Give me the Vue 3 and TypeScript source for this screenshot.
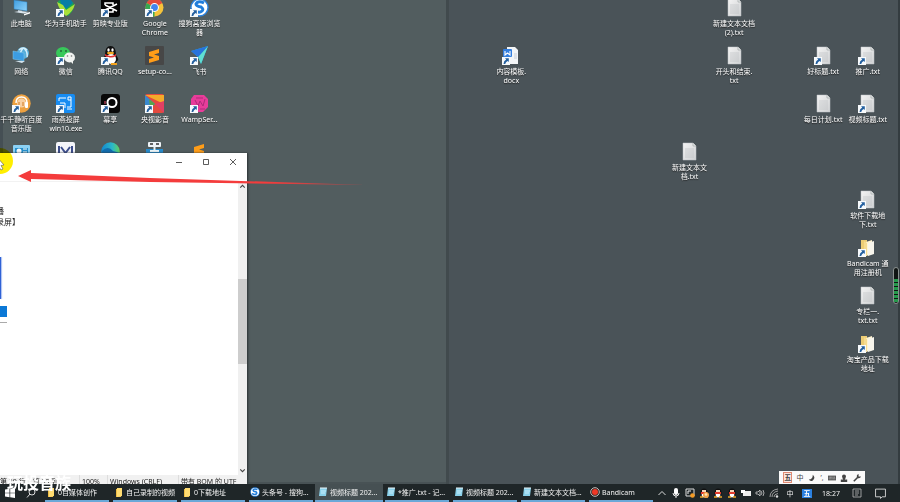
<script setup lang="ts">
interface DesktopItem {
  label: string
  icon: string
  col: number
  row: number
  shortcut?: boolean
}

interface Task {
  label: string
  icon: string
  active?: boolean
}

const items: DesktopItem[] = [
  { label: '此电脑', icon: 'pc', col: 1, row: 1 },
  { label: '华为手机助手', icon: 'huawei', col: 2, row: 1, shortcut: true },
  { label: '剪映专业版', icon: 'jianying', col: 3, row: 1, shortcut: true },
  { label: 'Google\nChrome', icon: 'chrome', col: 4, row: 1, shortcut: true },
  { label: '搜狗高速浏览\n器', icon: 'sogou', col: 5, row: 1, shortcut: true },
  { label: '网络', icon: 'network', col: 1, row: 2 },
  { label: '微信', icon: 'wechat', col: 2, row: 2, shortcut: true },
  { label: '腾讯QQ', icon: 'qq', col: 3, row: 2, shortcut: true },
  { label: 'setup-co...', icon: 'sublime', col: 4, row: 2 },
  { label: '飞书', icon: 'feishu', col: 5, row: 2, shortcut: true },
  { label: '千千静听百度\n音乐版', icon: 'music', col: 1, row: 3, shortcut: true },
  { label: '雨燕投屏\nwin10.exe', icon: 'cast', col: 2, row: 3, shortcut: true },
  { label: '幕享', icon: 'letsview', col: 3, row: 3, shortcut: true },
  { label: '央视影音', icon: 'cctv', col: 4, row: 3, shortcut: true },
  { label: 'WampSer...', icon: 'wamp', col: 5, row: 3, shortcut: true },
  { label: '', icon: 'panel', col: 1, row: 4 },
  { label: '', icon: 'mark', col: 2, row: 4 },
  { label: '', icon: 'edge', col: 3, row: 4 },
  { label: '', icon: 'tool', col: 4, row: 4 },
  { label: '', icon: 'sublime-s', col: 5, row: 4 },
  { label: '内容模板.\ndocx', icon: 'docx', col: 12, row: 2, shortcut: true },
  { label: '新建文本文\n档.txt', icon: 'txt', col: 16, row: 4 },
  { label: '新建文本文档\n(2).txt', icon: 'txt', col: 17, row: 1 },
  { label: '开头和结束.\ntxt', icon: 'txt', col: 17, row: 2 },
  { label: '好标题.txt', icon: 'txt', col: 19, row: 2, shortcut: true },
  { label: '每日计划.txt', icon: 'txt', col: 19, row: 3 },
  { label: '推广.txt', icon: 'txt', col: 20, row: 2, shortcut: true },
  { label: '视频标题.txt', icon: 'txt', col: 20, row: 3, shortcut: true },
  { label: '软件下载地\n下.txt', icon: 'txt', col: 20, row: 5, shortcut: true },
  { label: 'Bandicam 通\n用注册机', icon: 'folder', col: 20, row: 6, shortcut: true },
  { label: '专栏一.\ntxt.txt', icon: 'txt', col: 20, row: 7 },
  { label: '淘宝产品下载\n地址', icon: 'folder', col: 20, row: 8, shortcut: true },
]

const tasks: Task[] = [
  { label: '0自媒体创作', icon: 'dir' },
  { label: '自己录制的视频', icon: 'dir' },
  { label: '0下载地址', icon: 'dir' },
  { label: '头条号 - 搜狗...', icon: 'sogou' },
  { label: '视频标题 202...', icon: 'note', active: true },
  { label: '*推广.txt - 记...', icon: 'note' },
  { label: '视频标题 202...', icon: 'note' },
  { label: '新建文本文档...', icon: 'note' },
  { label: 'Bandicam', icon: 'record' },
]

const trayIcons: string[] = ['up', 'mic', 'capture', 'penguin-a', 'penguin', 'penguin', 'battery', 'speaker', 'wifi']
const meterBars: number[] = [1, 2, 3, 4, 5, 6]
</script>

<template>
  <div class="screen">
    <svg class="defs" aria-hidden="true">
      <defs>
        <linearGradient id="paper" x1="0" y1="0" x2="1" y2="1"><stop offset="0" stop-color="#f4f4f4" /><stop offset="1" stop-color="#cfd1d3" /></linearGradient>
        <linearGradient id="monitor" x1="0" y1="0" x2="1" y2="1"><stop offset="0" stop-color="#3f9de0" /><stop offset="1" stop-color="#8fd3fa" /></linearGradient>
        <linearGradient id="edgeg" x1="0" y1="0" x2="1" y2="0"><stop offset="0" stop-color="#1287d0" /><stop offset="0.6" stop-color="#2cb8c8" /><stop offset="1" stop-color="#63d05c" /></linearGradient>
        <linearGradient id="fade" x1="0" y1="0" x2="1" y2="0"><stop offset="0.7" stop-color="#f43c3c" /><stop offset="1" stop-color="#f43c3c" stop-opacity="0.4" /></linearGradient>
      </defs>
      <symbol id="pc" viewBox="0 0 19 19">
        <path d="M2 2 L15 4 V13 L2 11Z" fill="url(#monitor)" stroke="#2f7db8" stroke-width=".5" />
        <path d="M6 12 L10 12.700 V15 L6 14Z" fill="#b8c8d2" /><path d="M2 14 L12 15.500 L17 14 L8 13Z" fill="#dbe6ed" /><path d="M12 16 L18 14 L18 15.500 L12 17.500Z" fill="#fff" />
      </symbol>
      <symbol id="network" viewBox="0 0 19 19">
        <circle cx="11" cy="7" r="6" fill="#57add8" /><path d="M7 4 Q11 0 15 4 M7 10 Q10 2 12 2 Q16 6 15 11" fill="none" stroke="#d4effc" stroke-width="1.500" />
        <path d="M1 5 L12 7 V15 L1 13Z" fill="#3c9de2" stroke="#80caef" stroke-width=".5" /><path d="M3 15 L10 17 L13 15Z" fill="#d6e6ef" />
      </symbol>
      <symbol id="huawei" viewBox="0 0 19 19">
        <path d="M2 3 Q8 0 17 4 Q20 11 12 18 L8 16 Q2 11 2 3Z" fill="#19a84e" /><path d="M4 2 H15 L17 5 L10 11 L5 6Z" fill="#087ea5" /><path d="M1 4 L7 7 L10 12 L19 6 Q17 14 10 18 Q3 12 1 4Z" fill="#a9e03a" />
      </symbol>
      <symbol id="jianying" viewBox="0 0 19 19">
        <rect width="19" height="19" rx="3" fill="#050505" /><path d="M4 7 V5 H12 V7 M4 12 V14 H12 V12 M4 7 L16 13 M4 12 L16 6" fill="none" stroke="#fff" stroke-width="1.500" />
      </symbol>
      <symbol id="chrome" viewBox="0 0 19 19">
        <circle cx="9.500" cy="9.500" r="9" fill="#f5c33b" /><path d="M9.500 9.500 L1.700 5 A9 9 0 0 1 17.300 5Z" fill="#e34b3d" /><path d="M9.500 9.500 L1.700 5 A9 9 0 0 0 9.500 18.500Z" fill="#36a853" /><circle cx="9.500" cy="9.500" r="4.400" fill="#fff" /><circle cx="9.500" cy="9.500" r="3.400" fill="#4384ee" />
      </symbol>
      <symbol id="sogou" viewBox="0 0 19 19">
        <circle cx="9.500" cy="9.500" r="9.200" fill="#2c82dc" /><circle cx="9.500" cy="9.500" r="7.800" fill="#fff" /><path d="M14 5 Q8 2 6 6 Q6 8 11 9 Q14 11 12 13 Q9 16 4 12" fill="none" stroke="#207ddb" stroke-width="3" />
      </symbol>
      <symbol id="wechat" viewBox="0 0 19 19">
        <ellipse cx="7" cy="7" rx="7" ry="6" fill="#37c85a" /><path d="M3 11 L2 15 L7 12Z" fill="#37c85a" /><circle cx="5" cy="5" r="1" fill="#246d38" /><circle cx="10" cy="5" r="1" fill="#246d38" /><ellipse cx="13.500" cy="11.500" rx="5.500" ry="5" fill="#f1f3f1" /><path d="M14 15 L17 18 L17 14Z" fill="#f1f3f1" /><circle cx="11.500" cy="10" r=".8" fill="#777" /><circle cx="15.500" cy="10" r=".8" fill="#777" />
      </symbol>
      <symbol id="qq" viewBox="0 0 19 19">
        <path d="M4 9 Q4 0 9.500 0 Q15 0 15 9 Q19 14 16 15 Q15 18 9 18 Q3 18 2 13Z" fill="#111" /><ellipse cx="10" cy="13" rx="5" ry="5" fill="#fff" /><ellipse cx="7.500" cy="4" rx="1.200" ry="1.700" fill="#fff" /><ellipse cx="11.500" cy="4" rx="1.200" ry="1.700" fill="#fff" /><ellipse cx="9.500" cy="7" rx="3.500" ry="1.200" fill="#f5aa22" /><path d="M4 8 Q10 12 15 8 L15 10 Q10 13 4 10Z" fill="#e33131" /><path d="M10 17 H16 V19 H10Z" fill="#f3a31e" />
      </symbol>
      <symbol id="sublime" viewBox="0 0 19 19">
        <rect width="19" height="19" rx="1" fill="#474747" /><path d="M4 6 L14 3 V7 L9 8.500 L14 10 V14 L4 17 V13 L9 11.500 L4 10Z" fill="#ff9d18" />
      </symbol>
      <symbol id="sublime-s" viewBox="0 0 19 19"><path d="M4 5 L14 2 V6 L9 7.500 L14 9 V14 L4 17Z" fill="#ff9d18" /></symbol>
      <symbol id="feishu" viewBox="0 0 19 19">
        <path d="M1 5 L18 0 L11 18 L8 11Z" fill="#25a9d8" /><path d="M18 0 L8 11 L11 18Z" fill="#60dfd2" /><path d="M1 5 L18 0 L8 11Z" fill="#2874dc" />
      </symbol>
      <symbol id="music" viewBox="0 0 19 19">
        <circle cx="9.500" cy="9.500" r="9.200" fill="#eda140" /><path d="M4 9 Q4 3 9.500 3 Q15 3 15 9 V13" fill="none" stroke="#fff" stroke-width="1.500" /><circle cx="9.500" cy="9" r="4.500" fill="#f8d0a2" /><rect x="13" y="8" width="3" height="6" rx="1" fill="#fff" /><path d="M7 8 V12 M11 8 V12" stroke="#d17a23" stroke-width="1" />
      </symbol>
      <symbol id="cast" viewBox="0 0 19 19">
        <rect width="19" height="19" rx="2" fill="#178cf2" /><path d="M3 7 V4 H10 M12 3 H15 V6 H12Z M15 6 V13 H11 M4 9 H9 V14 M11 15 H16" fill="none" stroke="#fff" stroke-width="1" />
      </symbol>
      <symbol id="letsview" viewBox="0 0 19 19">
        <rect width="19" height="19" rx="3" fill="#080808" /><circle cx="11" cy="8.500" r="4.500" fill="none" stroke="#fff" stroke-width="2" /><path d="M7 12 L5 16" stroke="#fff" stroke-width="2" /><path d="M4 7 V10" stroke="#e64d70" stroke-width="1" />
      </symbol>
      <symbol id="cctv" viewBox="0 0 19 19">
        <rect width="19" height="19" rx="2" fill="#e44a3f" /><path d="M0 1 H19 V10Z" fill="#f5ab2a" /><path d="M0 1 L10 10 L0 19Z" fill="#3989ce" /><path d="M4 5 L10 10 L5 14Z" fill="#57a54a" /><path d="M10 10 L19 7 V19Z" fill="#e33f63" />
      </symbol>
      <symbol id="wamp" viewBox="0 0 19 19">
        <path d="M4 1 H14 L18 5 V13 L13 18 H5 L1 14 V5Z" fill="#e83c9a" /><path d="M5 6 L8 12 L10 7 L13 12 L15 5 M6 4 H13 M10 15 H15" fill="none" stroke="#ad2a78" stroke-width="1" />
      </symbol>
      <symbol id="panel" viewBox="0 0 19 19"><rect x="1" y="3" width="17" height="14" rx="1" fill="#8cd2f5" /><path d="M3 6 H16 V15 H3Z" fill="#258fcb" /><circle cx="7" cy="9" r="2.500" fill="#f4f8fa" /><path d="M11 7 H15 M11 10 H15" stroke="#fff" /></symbol>
      <symbol id="mark" viewBox="0 0 19 19"><rect width="19" height="19" rx="2" fill="#f4f5fa" /><path d="M3 4 V14 M16 4 V14 M5 5 L9.500 11 L14 5" fill="none" stroke="#3d4e8c" stroke-width="2" /></symbol>
      <symbol id="edge" viewBox="0 0 19 19"><circle cx="9.500" cy="9.500" r="9.300" fill="url(#edgeg)" /><path d="M1 9 Q7 3 12 9 L19 11 Q16 18 8 18 Q1 15 1 9Z" fill="#126dae" /></symbol>
      <symbol id="tool" viewBox="0 0 19 19"><rect x="3" width="13" height="5" rx="1" fill="#eef3f7" /><path d="M5 2 H8 M11 2 H14" stroke="#333" stroke-width="1.500" /><path d="M1 7 H18 V18 H1Z" fill="#288bcc" /><path d="M9.500 5 V10 M5 9 H14" stroke="#e8f3f7" stroke-width="2" /></symbol>
      <symbol id="txt" viewBox="0 0 19 19"><path d="M3 1 H13 L16 4 V18 H3Z" fill="url(#paper)" stroke="#c2c5c8" stroke-width=".5" /><path d="M13 1 V4 H16" fill="#e9ebec" stroke="#999da0" stroke-width=".6" /><path d="M5 7 H14 M5 9 H14 M5 11 H14 M5 13 H14 M5 15 H14" stroke="#b8bcc0" stroke-width=".6" /></symbol>
      <symbol id="docx" viewBox="0 0 19 19"><path d="M5 1 H13 L16 4 V18 H5Z" fill="#f3f5f7" /><path d="M12 8 H15 M12 10 H15 M12 12 H15" stroke="#b7c0cc" stroke-width=".7" /><rect x="1" y="3" width="9" height="8" rx="1" fill="#347fdf" /><path d="M3 5 V9 L5.500 7 L8 9 V5" fill="none" stroke="#fff" stroke-width="1.100" /></symbol>
      <symbol id="folder" viewBox="0 0 19 19"><path d="M3 2 H9 V18 H3Z" fill="#edcd75" /><path d="M8 4 L14 2 V16 L8 18Z" fill="#fff4d2" /><path d="M10 5 L16 3 V16 L10 18Z" fill="#f7f5ec" /><path d="M6 3 L9 5 V18 L6 16Z" fill="#f5db90" /></symbol>
      <symbol id="arrow" viewBox="0 0 8 8"><rect width="8" height="8" fill="#f7fafc" /><path d="M3 1.300 H6.800 V5 L5.600 3.900 Q3.700 4.700 3.200 7 L1.500 7 Q1.600 4 4.200 2.600Z" fill="#24609f" /></symbol>
      <symbol id="dir" viewBox="0 0 10 10"><path d="M2 2 H7 V10 H2Z" fill="#eebd46" /><path d="M3 1 H8 V9 L3 10Z" fill="#ffdc72" /></symbol>
      <symbol id="note" viewBox="0 0 10 10"><path d="M2 1 H9 L8 9 H1Z" fill="#8bd1ea" /><path d="M2 1 H9" stroke="#e8f5f9" /><path d="M3 4 H8 M3 6 H7" stroke="#d8f4ff" stroke-width=".8" /></symbol>
      <symbol id="record" viewBox="0 0 10 10"><circle cx="5" cy="5" r="4.300" fill="#252020" stroke="#f4e4df" stroke-width=".8" /><circle cx="5" cy="5" r="3" fill="#ef3826" /></symbol>
      <symbol id="up" viewBox="0 0 10 10"><path d="M1.500 7 L5 3.500 L8.500 7" fill="none" stroke="#ddd" /></symbol>
      <symbol id="mic" viewBox="0 0 10 10"><rect x="3" y="0" width="4" height="7" rx="2" fill="#fff" /><path d="M2 5 Q2 8 5 8 Q8 8 8 5 M5 8 V10" fill="none" stroke="#eee" /></symbol>
      <symbol id="capture" viewBox="0 0 10 10"><path d="M1 1 H9 V8 H1Z" fill="none" stroke="#ddd" /><path d="M3 6 V3 H6" fill="none" stroke="#eee" /><circle cx="7.500" cy="7.500" r="2.300" fill="#f39b25" /></symbol>
      <symbol id="penguin" viewBox="0 0 10 10"><ellipse cx="5" cy="5" rx="3.500" ry="4.500" fill="#111" /><ellipse cx="5" cy="7" rx="2.400" ry="2.500" fill="#fff" /><path d="M2 4 H8 V6 H2Z" fill="#e23c2c" /><path d="M3 2 H7 V4 H3Z" fill="#f1d7bd" /><path d="M1 9 H4 M6 9 H9" stroke="#efaa28" stroke-width="1.300" /></symbol>
      <symbol id="penguin-a" viewBox="0 0 10 10"><use href="#penguin" /><circle cx="7" cy="7" r="3" fill="#f0a34b" /><circle cx="7" cy="6.500" r="1.300" fill="#ffe2b5" /></symbol>
      <symbol id="battery" viewBox="0 0 10 10"><path d="M2 3 H10 V8 H2Z" fill="#eee" /><path d="M0 2 H4 V5 H0Z" fill="#fff" /></symbol>
      <symbol id="speaker" viewBox="0 0 10 10"><path d="M1 4 H3 L5 2 V8 L3 6 H1Z M6 3 Q8 5 6 7 M8 2 Q10 5 8 8" fill="none" stroke="#ccc" stroke-width=".8" /></symbol>
      <symbol id="wifi" viewBox="0 0 10 10"><path d="M1 9 Q1 2 9 1 M3 9 Q3 4 9 3 M5 9 Q5 6 9 5.500" fill="none" stroke="#aaa" stroke-width=".9" /><circle cx="8" cy="8.500" r="1.200" fill="#ddd" /></symbol>
    </svg>

    <main class="desktop">
      <div class="monitor left-monitor"></div>
      <div class="monitor right-monitor"></div>

      <div class="icons">
        <a v-for="item in items" :key="item.col + '-' + item.row" href="#" class="item" :style="{ gridColumn: item.col, gridRow: item.row }">
          <span class="picture">
            <svg class="glyph"><use :href="'#' + item.icon" /></svg>
            <svg v-if="item.shortcut" class="badge"><use href="#arrow" /></svg>
          </span>
          <span class="label">{{ item.label }}</span>
        </a>
      </div>

      <section class="notepad">
        <header class="titlebar">
          <button type="button" aria-label="最小化"><svg viewBox="0 0 8 8"><path d="M1 4.500 H7" /></svg></button>
          <button type="button" aria-label="最大化"><svg viewBox="0 0 8 8"><path d="M1.500 1.500 H6.500 V6.500 H1.500Z" /></svg></button>
          <button type="button" aria-label="关闭"><svg viewBox="0 0 8 8"><path d="M1 1 L7 7 M7 1 L1 7" /></svg></button>
        </header>
        <div class="menu"></div>
        <div class="body">
          <div class="document">
            <p>播</p>
            <p>录屏】</p>
            <div class="frame"></div>
            <div class="selection"></div>
            <div class="rule"></div>
          </div>
          <div class="scrollbar">
            <svg viewBox="0 0 8 8"><path d="M2 5 L4 3 L6 5" /></svg>
            <div class="track"><div class="thumb"></div></div>
            <svg viewBox="0 0 8 8"><path d="M2 3 L4 5 L6 3" /></svg>
          </div>
        </div>
        <footer class="status">
          <span class="position">第 39 行，第 39 列</span>
          <span class="zoom">100%</span>
          <span class="eol">Windows (CRLF)</span>
          <span class="encoding">带有 BOM 的 UTF</span>
        </footer>
      </section>

      <div class="spotlight"></div>
      <svg class="pointer" viewBox="0 0 370 30">
        <path d="M31 13 L150 18 L366 25 L150 22 L31 19Z" fill="url(#fade)" />
        <path d="M18 16 L31 10 V22Z" fill="#f43c3c" />
        <path d="M-4 -4 L4 5 L1 5.500 L3 9 L1 10 L-1 7Z" fill="#fff" stroke="#555" stroke-width=".6" />
      </svg>

      <div class="meter"><i v-for="bar in meterBars" :key="bar"></i></div>

      <div class="ime">
        <b class="wubi">五</b>
        <span>中</span>
        <svg viewBox="0 0 10 10"><path d="M6 1 Q10 5 6 8 Q3 10 1 7 Q6 7 6 1Z" fill="#444" /></svg>
        <span>’,</span>
        <svg viewBox="0 0 10 10"><path d="M0 2 H10 V8 H0Z" fill="#555" /><path d="M1 4 H9 M1 6 H2 M3 6 H7 M8 6 H9" stroke="#fff" stroke-width=".8" stroke-dasharray="1 .6" /></svg>
        <svg viewBox="0 0 10 10"><circle cx="5" cy="3" r="2.500" fill="#444" /><path d="M3 5 H7 L6 7 H9 V10 H1 V7 H4Z" fill="#444" /></svg>
        <svg viewBox="0 0 10 10"><path d="M1 9 L6 4" stroke="#444" stroke-width="2" /><path d="M5 4 Q4 1 7 0 L7 3 L10 3 Q9 6 6 5Z" fill="#444" /></svg>
      </div>
    </main>

    <footer class="taskbar">
      <button type="button" class="start" aria-label="开始"><svg viewBox="0 0 10 10"><path d="M0 1.500 L4.500 .8 V4.700 H0Z M5.200 .7 L10 0 V4.700 H5.200Z M0 5.300 H4.500 V9.200 L0 8.500Z M5.200 5.300 H10 V10 L5.200 9.300Z" fill="#fff" /></svg></button>
      <button type="button" class="search" aria-label="搜索"><svg viewBox="0 0 10 10"><circle cx="6" cy="4" r="3" /><path d="M4 6 L1 9.500" /></svg></button>
      <nav class="tasks">
        <button v-for="(task, index) in tasks" :key="index" type="button" class="task" :class="{ active: task.active }">
          <svg><use :href="'#' + task.icon" /></svg>
          <span>{{ task.label }}</span>
        </button>
      </nav>
      <div class="tray">
        <svg v-for="(name, index) in trayIcons" :key="index"><use :href="'#' + name" /></svg>
        <span class="lang">中</span>
        <b class="input-mode">五</b>
        <time>18:27</time>
        <svg class="news" viewBox="0 0 10 10"><path d="M1 1 H9 V9 H1Z M3 3 H7 M3 5 H7 M3 7 H6" fill="none" stroke="#bbb" stroke-width=".8" /></svg>
        <svg class="notice" viewBox="0 0 10 10"><path d="M0.500 1 H9.500 V8 H6.500 L5 9.500 L5 8 H0.500Z" fill="none" stroke="#ddd" stroke-width=".8" /></svg>
      </div>
      <strong class="watermark">玩投音族</strong>
    </footer>
  </div>
</template>

<style>
body {
  overflow: hidden;
  background: #1f2628;
}
</style>

<style scoped>
.screen {
  display: flex;
  flex-direction: column;
  height: 100vh;
  overflow: hidden;
  font-family: "Noto Sans", "Noto Sans CJK SC", sans-serif;
  font-size: 7px;
  line-height: 9px;
}
.defs {
  position: absolute;
  width: 0;
  height: 0;
}
button {
  border: 0;
  padding: 0;
  background: none;
  font: inherit;
  color: inherit;
}
.desktop {
  position: relative;
  display: flex;
  flex: 1;
  min-height: 0;
}
.monitor {
  box-sizing: border-box;
  flex: 1;
}
.left-monitor {
  background: #525d5f;
  border-left: 3px solid #454f54;
  border-bottom: 2px solid #485255;
}
.right-monitor {
  flex: 0 0 50.5%;
  background: #4a5358;
  border-left: 3px solid #414a4d;
  border-right: 2px solid #343c40;
}
.icons {
  position: absolute;
  inset: -2px 10px auto -1px;
  display: grid;
  grid-template-columns: repeat(20, 1fr);
  grid-auto-rows: 48px;
}
.item {
  display: flex;
  flex-direction: column;
  align-items: center;
  gap: 2px;
  min-width: 0;
  color: #fff;
  text-decoration: none;
}
.picture {
  position: relative;
  width: 19px;
  height: 19px;
}
.glyph {
  display: block;
  width: 19px;
  height: 19px;
}
.badge {
  position: absolute;
  left: 0;
  bottom: 0;
  width: 8px;
  height: 8px;
}
.label {
  white-space: pre;
  text-align: center;
  text-shadow: 0 1px 1px #222;
}
.notepad {
  position: absolute;
  left: 0;
  top: 153px;
  bottom: 0;
  width: 247px;
  display: flex;
  flex-direction: column;
  overflow: hidden;
  background: #fff;
  box-shadow: 1px 0 2px #2a3133;
  color: #222;
}
.titlebar {
  display: flex;
  justify-content: flex-end;
  height: 17px;
  padding-right: 1px;
}
.titlebar button {
  display: grid;
  place-items: center;
  width: 27px;
}
.titlebar svg {
  width: 8px;
  height: 8px;
  fill: none;
  stroke: #333;
  stroke-width: .8;
}
.menu {
  height: 11px;
  border-bottom: 1px solid #f2f2f2;
}
.body {
  display: flex;
  flex: 1;
  min-height: 0;
}
.document {
  flex: 1;
  padding-top: 23px;
  font-size: 8px;
  line-height: 11px;
}
.document p {
  margin: 0 0 0 -4px;
}
.frame {
  width: 1px;
  height: 42px;
  margin-top: 30px;
  background: #2f62d6;
  box-shadow: 1px 0 1px #9fb7ef;
}
.selection {
  width: 7px;
  height: 11px;
  margin-top: 7px;
  background: #0b78d6;
}
.rule {
  width: 7px;
  height: 1px;
  margin-top: 5px;
  background: #aaa;
}
.scrollbar {
  display: flex;
  flex-direction: column;
  width: 9px;
  background: #f0f0f0;
}
.scrollbar svg {
  width: 9px;
  height: 9px;
  fill: none;
  stroke: #444;
}
.track {
  flex: 1;
  padding-top: 88px;
}
.thumb {
  height: 85px;
  background: #cdcdcd;
}
.status {
  display: flex;
  height: 9px;
  background: #f1f1f1;
  overflow: hidden;
  white-space: nowrap;
  line-height: 14px;
}
.status span {
  box-sizing: border-box;
  height: 14px;
  padding-left: 2px;
  border-left: 1px solid #ddd;
}
.status .position {
  width: 79px;
  padding-left: 0;
  border: 0;
}
.zoom {
  width: 28px;
}
.eol {
  width: 71px;
}
.spotlight {
  position: absolute;
  left: -13px;
  top: 148px;
  width: 26px;
  height: 26px;
  border-radius: 50%;
  background: #ffee00;
  mix-blend-mode: multiply;
}
.pointer {
  position: absolute;
  left: 0;
  top: 160px;
  width: 370px;
  height: 30px;
}
.meter {
  position: absolute;
  right: 1px;
  top: 267px;
  display: flex;
  flex-direction: column;
  justify-content: flex-end;
  gap: 1px;
  box-sizing: border-box;
  width: 6px;
  height: 37px;
  padding: 1px 0;
  border: 1px solid #8b9290;
  border-radius: 3px;
  background: #101514;
}
.meter i {
  height: 3px;
  background: #25994b;
}
.ime {
  position: absolute;
  right: 35px;
  bottom: 0;
  display: flex;
  align-items: center;
  justify-content: space-around;
  box-sizing: border-box;
  width: 86px;
  height: 13px;
  padding: 0 2px;
  background: #fafafa;
  color: #444;
}
.ime svg {
  width: 8px;
  height: 8px;
}
.wubi {
  width: 9px;
  border: 1px solid #e08a72;
  box-sizing: border-box;
  text-align: center;
  background: #fbe4dd;
}
.taskbar {
  position: relative;
  display: flex;
  height: 18px;
  background: #1f2628;
  color: #f2f2f2;
}
.start,
.search {
  display: grid;
  place-items: center;
  width: 20px;
}
.search {
  width: 22px;
}
.start svg,
.search svg {
  width: 10px;
  height: 10px;
}
.search svg {
  fill: none;
  stroke: #eee;
  stroke-width: .9;
}
.tasks {
  display: flex;
  gap: 4px;
  flex: 1;
  padding-left: 3px;
}
.task {
  display: flex;
  align-items: center;
  gap: 2px;
  box-sizing: border-box;
  flex: 0 1 64px;
  min-width: 0;
  padding-left: 1px;
  border-bottom: 2px solid #6aa8d8;
  white-space: nowrap;
}
.task svg {
  flex: none;
  width: 10px;
  height: 10px;
}
.task.active {
  flex-basis: 68px;
  margin: 0 -2px;
  padding-left: 3px;
  background: #465053;
}
.tray {
  display: flex;
  align-items: center;
  gap: 4px;
  padding-right: 14px;
}
.tray svg {
  width: 10px;
  height: 10px;
}
.lang {
  width: 14px;
  text-align: center;
}
.input-mode {
  width: 10px;
  margin-left: 1px;
  background: #2a80e0;
  text-align: center;
  color: #fff;
}
time {
  margin: 0 8px 0 6px;
}
.tray .notice {
  width: 11px;
  height: 11px;
  margin-left: 9px;
}
.watermark {
  position: absolute;
  left: 7px;
  top: -10px;
  font-size: 16px;
  line-height: 18px;
  color: #fff;
}
</style>
